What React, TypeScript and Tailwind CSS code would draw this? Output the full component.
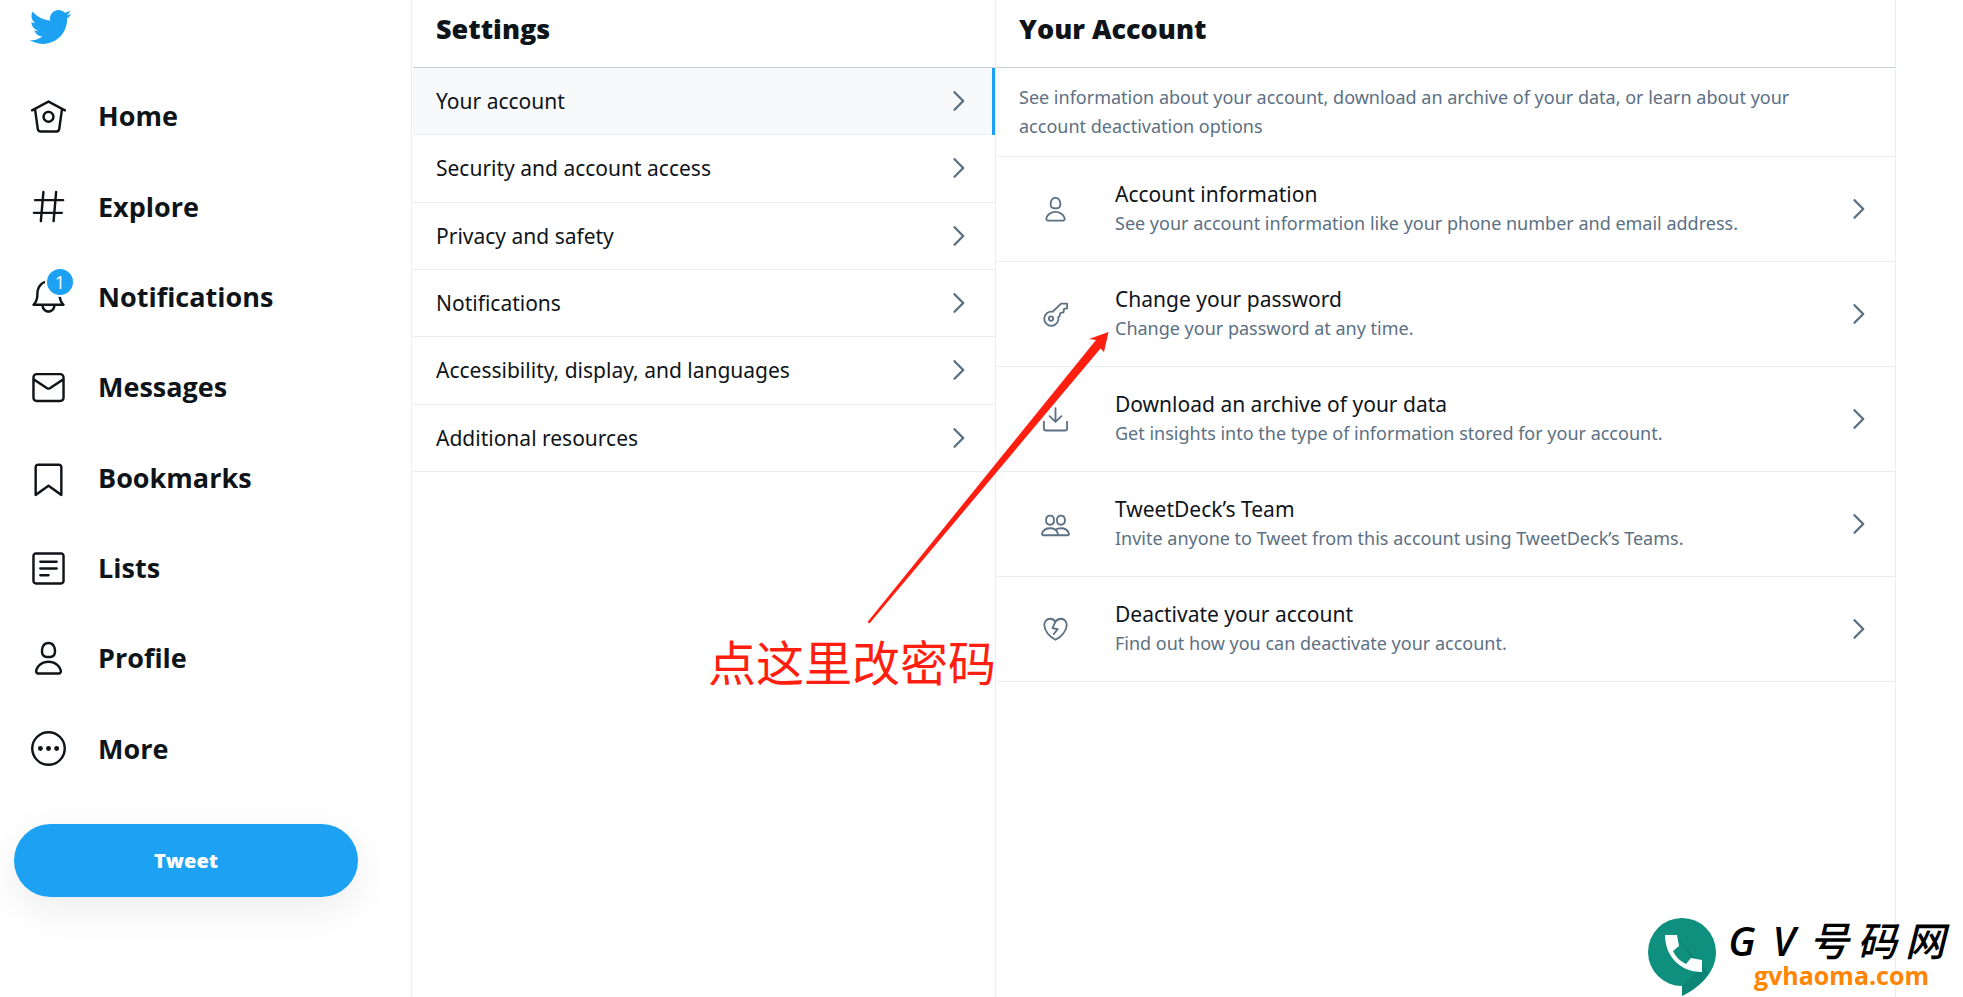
import React, { useState } from 'react';

const ICONS = {
  home: (
    <>
      <path d="M22.46 7.57L12.357 2.115c-.223-.12-.49-.12-.713 0L1.543 7.57c-.364.197-.5.652-.303 1.017.135.25.394.393.66.393.12 0 .243-.03.356-.09l.815-.44L4.7 19.963c.214 1.215 1.308 2.062 2.658 2.062h9.282c1.352 0 2.445-.848 2.663-2.087l1.626-11.49.818.442c.364.193.82.06 1.017-.304.196-.363.06-.818-.304-1.016zm-4.638 12.133c-.107.606-.703.822-1.18.822H7.36c-.48 0-1.075-.216-1.178-.798L4.48 7.69 12 3.628l7.522 4.06-1.7 12.015z" />
      <path d="M8.22 12.184c0 2.084 1.695 3.78 3.78 3.78s3.78-1.696 3.78-3.78-1.695-3.78-3.78-3.78-3.78 1.696-3.78 3.78zm6.06 0c0 1.258-1.022 2.28-2.28 2.28s-2.28-1.022-2.28-2.28 1.022-2.28 2.28-2.28 2.28 1.022 2.28 2.28z" />
    </>
  ),
  explore: (
    <path d="M21 7.337h-3.93l.372-4.272c.036-.412-.27-.775-.682-.812-.417-.03-.776.27-.812.683l-.383 4.4h-6.32l.37-4.27c.037-.413-.27-.776-.68-.813-.42-.03-.777.27-.813.683l-.382 4.4H3.782c-.414 0-.75.337-.75.75s.336.75.75.75H7.61l-.55 6.327H3c-.414 0-.75.336-.75.75s.336.75.75.75h3.93l-.372 4.272c-.036.412.27.775.682.812l.066.003c.385 0 .712-.295.746-.686l.383-4.4h6.32l-.37 4.27c-.036.413.27.776.682.813l.066.003c.385 0 .712-.295.746-.686l.382-4.4h3.957c.413 0 .75-.337.75-.75s-.337-.75-.75-.75H16.39l.55-6.327H21c.414 0 .75-.336.75-.75s-.336-.75-.75-.75zm-6.115 7.826h-6.32l.55-6.326h6.32l-.55 6.326z" />
  ),
  notifications: (
    <path d="M21.697 16.468c-.02-.016-2.14-1.64-2.103-6.03.02-2.532-.812-4.782-2.347-6.335C15.872 2.71 14.01 1.94 12.005 1.93h-.013c-2.004.01-3.866.78-5.242 2.174-1.534 1.553-2.368 3.802-2.346 6.334.037 4.33-2.02 5.967-2.102 6.03-.26.193-.366.53-.265.838.102.308.39.515.712.515h4.92c.102 2.31 1.997 4.16 4.33 4.16s4.226-1.85 4.327-4.16h4.922c.322 0 .61-.206.71-.514.103-.307-.003-.645-.263-.838zM12 20.478c-1.505 0-2.73-1.177-2.828-2.658h5.656c-.1 1.48-1.323 2.66-2.828 2.66zM4.38 16.32c.74-1.132 1.548-3.028 1.524-5.896-.018-2.16.644-3.982 1.913-5.267C8.91 4.05 10.397 3.437 12 3.43c1.603.008 3.087.62 4.18 1.728 1.27 1.285 1.933 3.106 1.915 5.267-.024 2.868.785 4.765 1.525 5.896H4.38z" />
  ),
  messages: (
    <path d="M19.25 3.018H4.75C3.233 3.018 2 4.252 2 5.77v12.495c0 1.518 1.233 2.753 2.75 2.753h14.5c1.517 0 2.75-1.235 2.75-2.753V5.77c0-1.518-1.233-2.752-2.75-2.752zm-14.5 1.5h14.5c.69 0 1.25.56 1.25 1.25v.714l-8.05 5.367c-.273.18-.626.182-.9-.002L3.5 6.482v-.714c0-.69.56-1.25 1.25-1.25zm14.5 14.998H4.75c-.69 0-1.25-.56-1.25-1.25V8.24l7.24 4.83c.383.256.822.384 1.26.384.44 0 .877-.128 1.26-.383l7.24-4.83v10.022c0 .69-.56 1.25-1.25 1.25z" />
  ),
  bookmarks: (
    <path d="M19.9 23.5c-.157 0-.312-.05-.442-.144L12 17.928l-7.458 5.43c-.228.164-.53.19-.782.06-.25-.127-.41-.385-.41-.667V5.6c0-1.24 1.01-2.25 2.25-2.25h12.798c1.24 0 2.25 1.01 2.25 2.25v17.15c0 .282-.158.54-.41.668-.106.055-.223.082-.34.082zM12 16.25c.155 0 .31.048.44.144l6.71 4.883V5.6c0-.412-.337-.75-.75-.75H5.6c-.413 0-.75.338-.75.75v15.677l6.71-4.883c.13-.096.285-.144.44-.144z" />
  ),
  lists: (
    <>
      <path d="M19.75 22H4.25C3.01 22 2 20.99 2 19.75V4.25C2 3.01 3.01 2 4.25 2h15.5C20.99 2 22 3.01 22 4.25v15.5c0 1.24-1.01 2.25-2.25 2.25zM4.25 3.5c-.414 0-.75.337-.75.75v15.5c0 .413.336.75.75.75h15.5c.414 0 .75-.337.75-.75V4.25c0-.413-.336-.75-.75-.75H4.25z" />
      <path d="M17 8.64H7c-.414 0-.75-.337-.75-.75s.336-.75.75-.75h10c.414 0 .75.335.75.75s-.336.75-.75.75zm0 4.11H7c-.414 0-.75-.336-.75-.75s.336-.75.75-.75h10c.414 0 .75.336.75.75s-.336.75-.75.75zm-5 4.11H7c-.414 0-.75-.335-.75-.75s.336-.75.75-.75h5c.414 0 .75.337.75.75s-.336.75-.75.75z" />
    </>
  ),
  profile: (
    <path d="M12 11.816c1.355 0 2.872-.15 3.84-1.256.814-.93 1.078-2.368.806-4.392-.38-2.825-2.117-4.512-4.646-4.512S7.734 3.343 7.354 6.17c-.272 2.022-.008 3.46.806 4.39.968 1.107 2.485 1.256 3.84 1.256zM8.84 6.368c.162-1.2.787-3.212 3.16-3.212s2.998 2.013 3.16 3.212c.207 1.55.057 2.627-.45 3.205-.455.52-1.266.743-2.71.743s-2.255-.223-2.71-.743c-.507-.578-.657-1.656-.45-3.205zm11.44 12.868c-.877-3.526-4.282-5.99-8.28-5.99s-7.403 2.464-8.28 5.99c-.172.692-.028 1.4.395 1.94.408.52 1.04.82 1.733.82h12.304c.693 0 1.325-.3 1.733-.82.424-.54.567-1.247.394-1.94zm-1.576 1.016c-.126.16-.316.246-.552.246H5.848c-.235 0-.426-.085-.552-.246-.137-.174-.18-.412-.12-.654.71-2.855 3.517-4.85 6.824-4.85s6.114 1.994 6.824 4.85c.06.242.017.48-.12.654z" />
  ),
  more: (
    <>
      <circle cx="12" cy="12" r="10" fill="none" stroke="currentColor" strokeWidth="1.5" />
      <circle cx="7" cy="12" r="1.5" />
      <circle cx="12" cy="12" r="1.5" />
      <circle cx="17" cy="12" r="1.5" />
    </>
  ),
  key: (
    <g fill="none" stroke="currentColor" strokeWidth="1.5" strokeLinejoin="round">
      <path d="M9.6 9.7 16.6 3h5v4l-2.5.4-.6 2.9-2.6.5-.5 2.6-1.1.7a5.9 5.9 0 1 1-4.7-4.4z" />
      <circle cx="8.3" cy="15.4" r="1.8" />
    </g>
  ),
  download: (
    <g fill="none" stroke="currentColor" strokeWidth="1.5" strokeLinecap="round" strokeLinejoin="round">
      <path d="M12 2.6v11.2M7.1 9.2l4.9 4.7 4.9-4.7" />
      <path d="M2.4 13.8v5.6c0 1 .7 1.7 1.7 1.7h15.8c1 0 1.7-.7 1.7-1.7v-5.6" />
    </g>
  ),
  team: (
    <g fill="none" stroke="currentColor" strokeWidth="1.5" strokeLinejoin="round">
      <path d="M7.5 4.7c2.2 0 3.3 1.3 3.3 3.8s-.9 3.7-3.3 3.7-3.3-1.2-3.3-3.7 1.1-3.8 3.3-3.8zM16.5 4.7c2.2 0 3.3 1.3 3.3 3.8s-.9 3.7-3.3 3.7-3.3-1.2-3.3-3.7 1.1-3.8 3.3-3.8z" />
      <path d="M13.3 20.9H2c-.8 0-1.4-.6-1.1-1.5.8-2.5 3.4-4.3 6.7-4.3 3.2 0 5.6 1.8 6.3 4.3.2.8 0 1.5-.6 1.5z" />
      <path d="M11.8 16.3c1.3-.8 2.9-1.2 4.6-1.2 3.3 0 5.9 1.8 6.7 4.3.3.9-.3 1.5-1.1 1.5h-8.7" />
    </g>
  ),
  heart: (
    <g fill="none" stroke="currentColor" strokeWidth="1.5" strokeLinecap="round" strokeLinejoin="round">
      <path d="M12 5.5C10.9 4 9.3 3.1 7.5 3.1 4.7 3.1 2.7 5.4 2.7 8.3c0 4.7 4.5 9.9 9.3 12.2 4.8-2.3 9.3-7.5 9.3-12.2 0-2.9-2-5.2-4.8-5.2-1.8 0-3.4.9-4.5 2.4z" />
      <path d="M12 5.5 9.5 10.9l4.3.9-3.3 4" />
    </g>
  ),
};

type IconName = keyof typeof ICONS;

const Icon: React.FC<{ name: IconName; className: string }> = ({ name, className }) => (
  <svg viewBox="0 0 24 24" fill="currentColor" aria-hidden="true" className={className}>
    {ICONS[name]}
  </svg>
);

const Chevron: React.FC = () => (
  <svg viewBox="0 0 24 24" fill="currentColor" aria-hidden="true" className="w-7 h-7 shrink-0 text-[#5b7083]">
    <path d="M17.207 11.293l-7.5-7.5c-.39-.39-1.023-.39-1.414 0s-.39 1.023 0 1.414L15.086 12l-6.793 6.793c-.39.39-.39 1.023 0 1.414.195.195.45.293.707.293s.512-.098.707-.293l7.5-7.5c.39-.39.39-1.023 0-1.414z" />
  </svg>
);

const NAV: { icon: IconName; label: string; badge?: number }[] = [
  { icon: 'home', label: 'Home' },
  { icon: 'explore', label: 'Explore' },
  { icon: 'notifications', label: 'Notifications', badge: 1 },
  { icon: 'messages', label: 'Messages' },
  { icon: 'bookmarks', label: 'Bookmarks' },
  { icon: 'lists', label: 'Lists' },
  { icon: 'profile', label: 'Profile' },
  { icon: 'more', label: 'More' },
];

const SETTINGS = [
  'Your account',
  'Security and account access',
  'Privacy and safety',
  'Notifications',
  'Accessibility, display, and languages',
  'Additional resources',
];

const ACCOUNT: { icon: IconName; title: string; text: string }[] = [
  { icon: 'profile', title: 'Account information', text: 'See your account information like your phone number and email address.' },
  { icon: 'key', title: 'Change your password', text: 'Change your password at any time.' },
  { icon: 'download', title: 'Download an archive of your data', text: 'Get insights into the type of information stored for your account.' },
  { icon: 'team', title: 'TweetDeck’s Team', text: 'Invite anyone to Tweet from this account using TweetDeck’s Teams.' },
  { icon: 'heart', title: 'Deactivate your account', text: 'Find out how you can deactivate your account.' },
];

const ColumnTitle: React.FC<{ children: React.ReactNode }> = ({ children }) => (
  <h2 className="px-[23px] pt-[7px] pb-[17px] font-['Open_Sans',sans-serif] text-[27px] leading-[43px] font-extrabold border-b border-[#c4cfd6]">
    {children}
  </h2>
);

const Sidebar: React.FC = () => (
  <header className="flex flex-col border-r border-[#ebeef0] pt-[5px] font-['Open_Sans',sans-serif]">
    <a href="#home" aria-label="Twitter" className="ml-7 self-start text-[#1da1f2]">
      <svg viewBox="0 0 24 24" fill="currentColor" aria-hidden="true" className="w-11 h-11">
        <path d="M23.643 4.937c-.835.37-1.732.62-2.675.733.962-.576 1.7-1.49 2.048-2.578-.9.534-1.897.922-2.958 1.13-.85-.904-2.06-1.47-3.4-1.47-2.572 0-4.658 2.086-4.658 4.66 0 .364.042.718.12 1.06-3.873-.195-7.304-2.05-9.602-4.868-.4.69-.63 1.49-.63 2.342 0 1.616.823 3.043 2.072 3.878-.764-.025-1.482-.234-2.11-.583v.06c0 2.257 1.605 4.14 3.737 4.568-.392.106-.803.162-1.227.162-.3 0-.593-.028-.877-.082.593 1.85 2.313 3.198 4.352 3.234-1.595 1.25-3.604 1.995-5.786 1.995-.376 0-.747-.022-1.112-.065 2.062 1.323 4.51 2.093 7.14 2.093 8.57 0 13.255-7.098 13.255-13.254 0-.2-.005-.402-.014-.602.91-.658 1.7-1.477 2.323-2.41z" />
      </svg>
    </a>
    <nav className="mt-[22px] grid auto-rows-fr min-h-[723px]">
      {NAV.map((item) => (
        <a key={item.label} href={`#${item.icon}`} className="flex items-center gap-[30px] pl-[29px]">
          <span className="relative">
            <Icon name={item.icon} className="w-[39px] h-[39px]" />
            {item.badge && (
              <span className="absolute left-[18px] -top-2 w-[26px] h-[26px] rounded-full bg-[#1da1f2] ring-2 ring-white text-white text-lg leading-[26px] text-center">
                {item.badge}
              </span>
            )}
          </span>
          <span className="text-[27px] leading-9 font-bold">{item.label}</span>
        </a>
      ))}
    </nav>
    <button
      type="button"
      className="mt-[30px] ml-[14px] mr-[53px] h-[73px] rounded-full bg-[#1da1f2] text-white text-[20px] font-extrabold shadow-[0_12px_42px_rgba(0,0,0,0.08)]"
    >
      Tweet
    </button>
  </header>
);

const Watermark: React.FC = () => (
  <div className="absolute right-[18px] bottom-0 flex items-start gap-2">
    <svg viewBox="0 0 70 80" className="w-[70px] h-20" aria-hidden="true">
      <path d="M35 1a34 34 0 0 0 0 68v10c15-7 34-22 34-44A34 34 0 0 0 35 1z" fill="#0f8f7e" />
      <path d="M30 21 62 56c-6 10-17 18-27 23v-10L53 52z" fill="#0c7a6c" opacity=".45" />
      <path d="M18 18h12l2 11-6 5c3 6 7 10 13 13l5-6 11 2v12C33 55 18 39 18 18z" fill="#fff" />
    </svg>
    <div className="flex flex-col items-end pt-0.5 font-['Open_Sans','Noto_Sans_CJK_SC',sans-serif]">
      <span className="flex items-center gap-2 text-[40px] leading-11 font-medium italic text-black">
        <span className="w-[34px] text-center font-semibold">G</span>
        <span className="w-[34px] text-center font-semibold">V</span>
        <span>号</span>
        <span>码</span>
        <span>网</span>
      </span>
      <a href="#gvhaoma" className="mr-[16px] font-bold text-[25px] leading-6 text-[#ff8400]">
        gvhaoma.com
      </a>
    </div>
  </div>
);

export default function App() {
  const [active, setActive] = useState(SETTINGS[0]);

  return (
    <div className="relative grid grid-cols-[412fr_584fr_900fr_67fr] min-h-screen overflow-hidden bg-white text-[#0f1419] font-['Noto_Sans','Noto_Sans_CJK_SC',sans-serif]">
      <Sidebar />

      {/* Settings list */}
      <section className="border-r border-[#ebeef0] pl-px">
        <ColumnTitle>Settings</ColumnTitle>
        <div className="grid auto-rows-fr min-h-[404px]">
          {SETTINGS.map((label) => (
            <button
              key={label}
              type="button"
              onClick={() => setActive(label)}
              className={`relative flex items-center justify-between px-[23px] text-left text-[21px] leading-7 border-b border-[#ebeef0] ${
                label === active ? 'bg-[#f7f9fa]' : ''
              }`}
            >
              {label}
              <Chevron />
              {label === active && <span className="absolute right-0 top-0 -bottom-px w-[3px] bg-[#1da1f2]" />}
            </button>
          ))}
        </div>
      </section>

      {/* Account details */}
      <main className="border-r border-[#ebeef0]">
        <ColumnTitle>Your Account</ColumnTitle>
        <p className="px-[23px] py-[15px] pr-20 text-[18px] leading-[29px] text-[#5b7083] border-b border-[#ebeef0]">
          See information about your account, download an archive of your data, or learn about your account deactivation
          options
        </p>
        {ACCOUNT.map((item) => (
          <a
            key={item.title}
            href={`#${item.icon}`}
            className="flex items-center px-[23px] py-[23px] border-b border-[#ebeef0]"
          >
            <span className="w-[73px] mr-[23px] flex justify-center text-[#5b7083]">
              <Icon name={item.icon} className="w-[29px] h-[29px]" />
            </span>
            <span className="flex-1 flex flex-col">
              <span className="text-[21px] leading-[29px]">{item.title}</span>
              <span className="text-[18px] leading-[29px] text-[#5b7083]">{item.text}</span>
            </span>
            <Chevron />
          </a>
        ))}
      </main>

      {/* Annotation drawn over the page */}
      <svg viewBox="0 0 242 293" aria-hidden="true" className="absolute left-[867px] top-[331px] w-[242px] h-[293px]">
        <path d="M.5 291 229 9 222 8 241.500 1 237 21 233.500 17.500 2.500 292.500z" fill="#ff1e10" />
      </svg>
      <p className="absolute left-[708px] top-[627px] text-[48px] leading-[72px] whitespace-nowrap text-[#ff1e10]">
        点这里改密码
      </p>

      <Watermark />
    </div>
  );
}
